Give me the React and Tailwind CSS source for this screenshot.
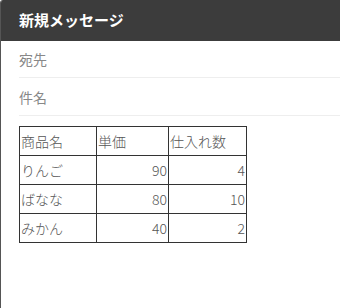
import React from 'react';

const rows = [
  { name: 'りんご', price: 90, qty: 4 },
  { name: 'ばなな', price: 80, qty: 10 },
  { name: 'みかん', price: 40, qty: 2 },
];

const font = { fontFamily: '"Noto Sans CJK JP", "Noto Sans", sans-serif' };

export default function App() {
  return (
    <div className="w-[340px] h-[308px] bg-white border-l border-[#555] rounded-tl-[3px] overflow-hidden" style={font}>
      <div className="h-[41px] bg-[#3c3c3c] flex items-center px-[18px]">
        <span className="text-white text-[15px] font-bold">新規メッセージ</span>
      </div>
      <div className="pl-[18px]">
        <div className="h-[37px] flex items-center text-[14px] text-[#888] border-b border-[#eee] pt-[1px]">宛先</div>
        <div className="h-[38px] flex items-center text-[14px] text-[#888] border-b border-[#eee] pt-[1px]">件名</div>
        <table className="mt-[10px] border-collapse text-[14px] text-[#555] font-light">
          <tbody>
            <tr className="h-[29px]">
              <td className="w-[77px] border border-[#333] px-[1px]">商品名</td>
              <td className="w-[72px] border border-[#333] px-[1px]">単価</td>
              <td className="w-[78px] border border-[#333] px-[1px]">仕入れ数</td>
            </tr>
            {rows.map((r) => (
              <tr key={r.name} className="h-[29px]">
                <td className="border border-[#333] px-[1px]">{r.name}</td>
                <td className="border border-[#333] px-[1px] text-right">{r.price}</td>
                <td className="border border-[#333] px-[1px] text-right">{r.qty}</td>
              </tr>
            ))}
          </tbody>
        </table>
      </div>
    </div>
  );
}
